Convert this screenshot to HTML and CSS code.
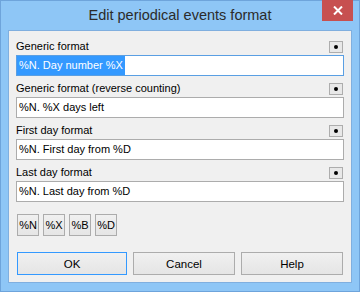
FILE: index.html
```html
<!DOCTYPE html>
<html lang="en">
<head>
    <meta charset="UTF-8">
    <title>Edit periodical events format</title>
    <link rel="stylesheet" href="styles.css">
</head>
<body>
    <div class="window">
        <div class="titlebar">
            <span class="title">Edit periodical events format</span>
            <button class="close-btn" aria-label="Close">
                <svg width="10" height="9" viewBox="0 0 10 9">
                    <path d="M1 0.5 L9 8.5 M9 0.5 L1 8.5" stroke="#fff" stroke-width="2" fill="none"/>
                </svg>
            </button>
        </div>

        <div class="client">
            <div class="fields">
                <div class="field">
                    <div class="field-head">
                        <label>Generic format</label>
                        <button class="dot-btn"><span class="dot"></span></button>
                    </div>
                    <div class="textbox focused"><span class="value selected">%N. Day number %X</span></div>
                </div>
                <div class="field">
                    <div class="field-head">
                        <label>Generic format (reverse counting)</label>
                        <button class="dot-btn"><span class="dot"></span></button>
                    </div>
                    <div class="textbox"><span class="value">%N. %X days left</span></div>
                </div>
                <div class="field">
                    <div class="field-head">
                        <label>First day format</label>
                        <button class="dot-btn"><span class="dot"></span></button>
                    </div>
                    <div class="textbox"><span class="value">%N. First day from %D</span></div>
                </div>
                <div class="field">
                    <div class="field-head">
                        <label>Last day format</label>
                        <button class="dot-btn"><span class="dot"></span></button>
                    </div>
                    <div class="textbox"><span class="value">%N. Last day from %D</span></div>
                </div>
            </div>

            <div class="macro-row">
                <button class="macro-btn">%N</button>
                <button class="macro-btn">%X</button>
                <button class="macro-btn">%B</button>
                <button class="macro-btn">%D</button>
            </div>

            <div class="dialog-buttons">
                <button class="dialog-btn default">OK</button>
                <button class="dialog-btn">Cancel</button>
                <button class="dialog-btn">Help</button>
            </div>
        </div>
    </div>
</body>
</html>
```

FILE: styles.css
```css
* {
    box-sizing: border-box;
}
body {
    margin: 0;
    font-family: "Liberation Sans", Arial, sans-serif;
    font-size: 11px;
    color: #000;
}
.window {
    width: 360px;
    height: 292px;
    background-color: #8ec6f6;
    border: 1px solid #6ea4db;
    display: flex;
    flex-direction: column;
}
.titlebar {
    position: relative;
    height: 29px;
    display: flex;
    align-items: center;
    justify-content: center;
    padding-bottom: 1px;
}
.title {
    font-size: 14.5px;
    color: #2b2b2b;
}
.close-btn {
    position: absolute;
    top: -1px;
    right: 6px;
    width: 31px;
    height: 21px;
    padding: 0;
    border: none;
    background-color: #c75050;
    display: flex;
    align-items: center;
    justify-content: center;
}
.client {
    margin: 0 7px;
    height: 253px;
    background-color: #f0f0f0;
    border: 1px solid #80afdf;
    padding: 9px 7px 7px;
    display: flex;
    flex-direction: column;
}
.fields {
    display: flex;
    flex-direction: column;
    gap: 6px;
}
.field-head {
    height: 13px;
    margin-bottom: 2px;
    display: flex;
    justify-content: space-between;
    align-items: center;
}
.field-head label {
    line-height: 13px;
}
.dot-btn {
    width: 14px;
    height: 12px;
    margin-right: 1px;
    padding: 0;
    border: 1px solid #adadad;
    background-color: #e8e8e8;
    display: flex;
    align-items: center;
    justify-content: center;
}
.dot {
    width: 4px;
    height: 4px;
    border-radius: 50%;
    background-color: #000;
}
.textbox {
    height: 21px;
    border: 1px solid #acacac;
    background-color: #fff;
    display: flex;
    align-items: stretch;
}
.textbox.focused {
    border-color: #5a9fe3;
}
.value {
    padding: 0 2px;
    line-height: 19px;
}
.value.selected {
    background-color: #3399ff;
    color: #fff;
}
.macro-row {
    margin-top: 12px;
    padding-left: 1px;
    display: flex;
    gap: 4px;
}
.macro-btn {
    width: 22px;
    height: 22px;
    padding: 0;
    border: 1px solid #acacac;
    background: linear-gradient(#f0f0f0, #e5e5e5);
    font-family: "Liberation Sans", Arial, sans-serif;
    font-size: 11px;
    color: #000;
}
.dialog-buttons {
    margin-top: 16px;
    padding-left: 1px;
    display: grid;
    grid-template-columns: 110px 102px 102px;
    gap: 6px;
}
.dialog-btn {
    height: 23px;
    padding: 0;
    border: 1px solid #acacac;
    background: linear-gradient(#f0f0f0, #e5e5e5);
    font-family: "Liberation Sans", Arial, sans-serif;
    font-size: 11.5px;
    color: #000;
}
.dialog-btn.default {
    border-color: #3399ff;
}
```
